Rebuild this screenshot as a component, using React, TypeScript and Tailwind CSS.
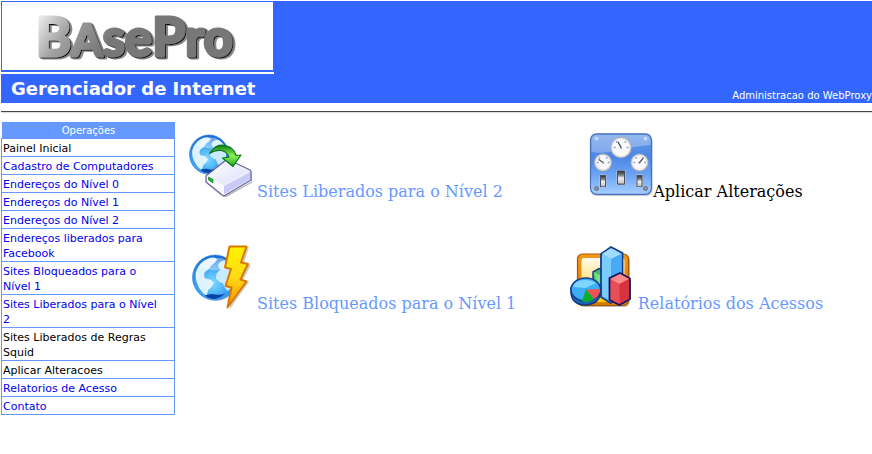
import React from 'react';

const menuItems = [
  { label: 'Painel Inicial', visited: true },
  { label: 'Cadastro de Computadores' },
  { label: 'Endereços do Nível 0' },
  { label: 'Endereços do Nível 1' },
  { label: 'Endereços do Nível 2' },
  { label: 'Endereços liberados para Facebook' },
  { label: 'Sites Bloqueados para o Nível 1' },
  { label: 'Sites Liberados para o Nível 2' },
  { label: 'Sites Liberados de Regras Squid', visited: true },
  { label: 'Aplicar Alteracoes', visited: true },
  { label: 'Relatorios de Acesso' },
  { label: 'Contato' },
];

const Logo = () => (
  <svg className="h-[68px] w-full" viewBox="0 0 272 68" role="img" aria-label="BasePro">
    <defs>
      <linearGradient id="metal" gradientUnits="userSpaceOnUse" x1="38" y1="10" x2="100" y2="50">
        <stop offset="0" stopColor="#f0f0f0" />
        <stop offset="0.45" stopColor="#a0a0a0" />
        <stop offset="1" stopColor="#777" />
      </linearGradient>
      <filter id="logoShadow" x="-5%" y="-10%" width="115%" height="130%">
        <feDropShadow dx="1" dy="1" stdDeviation="0.3" floodColor="#111" />
        <feDropShadow dx="2" dy="1" stdDeviation="0.6" floodColor="#888" />
      </filter>
    </defs>
    <text
      x="34"
      y="54"
      fontFamily="Lato, sans-serif"
      fontWeight="700"
      fontSize="51"
      fill="url(#metal)"
      stroke="url(#metal)"
      strokeWidth="3"
      strokeLinejoin="round"
      filter="url(#logoShadow)"
    >
      <tspan fontSize="54">B</tspan><tspan fontSize="45">A</tspan>se<tspan fontSize="54">P</tspan>ro
    </text>
  </svg>
);

const Globe = ({ id, cx, cy, r }: { id: string; cx: number; cy: number; r: number }) => (
  <g>
    <defs>
      <radialGradient id={id} cx="0.45" cy="0.62" r="0.62">
        <stop offset="0" stopColor="#7fdcff" />
        <stop offset="0.6" stopColor="#3aa0f0" />
        <stop offset="1" stopColor="#1767d2" />
      </radialGradient>
    </defs>
    <circle cx={cx + 0.8} cy={cy + 1} r={r} fill="#b9c6d6" />
    <circle cx={cx} cy={cy} r={r} fill={`url(#${id})`} stroke="#2a82de" strokeWidth="0.6" />
    <g transform={`translate(${cx} ${cy}) scale(${r / 20})`}>
      <path d="M-17-5Q-14-14-6-17Q0-19 2-16Q0-13-3-11Q-5-7-9-5Q-11-1-8 1Q-3 1-1 5Q-3 9-6 11Q-7 15-8 16Q-13 12-15 7Q-18 1-17-5Z" fill="#dff3ff" />
      <path d="M3-12Q6-16 10-15Q16-11 18-4Q18 2 16 7Q13 11 11 12Q8 9 7 5Q3 4 1 1Q0-4 5-7Q2-9 3-12Z" fill="#c9e9ff" />
      <path d="M-9 16Q-4 14 0 15Q5 16 9 14Q6 18 0 19Q-6 19-9 16Z" fill="#0643a8" />
      <path d="M-14-10Q-6-19 7-17Q14-13 15-9Q3-3-14-10Z" fill="#fff" opacity="0.35" />
    </g>
  </g>
);

const GlobeDriveIcon = () => (
  <svg className="size-16 shrink-0" viewBox="0 0 64 64" aria-hidden="true">
    <defs>
      <linearGradient id="driveTop" x1="0" y1="0" x2="1" y2="1">
        <stop offset="0" stopColor="#fff" />
        <stop offset="1" stopColor="#dcdcfc" />
      </linearGradient>
      <linearGradient id="greenArrow" x1="0" y1="0" x2="0" y2="1">
        <stop offset="0" stopColor="#077a12" />
        <stop offset="0.5" stopColor="#8cf05c" />
        <stop offset="1" stopColor="#18a61a" />
      </linearGradient>
    </defs>
    <Globe id="globeA" cx={21} cy={21.5} r={19.5} />
    <path d="M19 50L37 64L64 49V40" fill="none" stroke="#bbb" strokeWidth="1.5" />
    <path d="M18 43L38 27Q39 26 41 27L62 37Q63 38 63 39V47L37 62.5Q35.500 63 34 62L18 49Z" fill="#f4f4ff" stroke="#66669c" strokeWidth="1.3" />
    <path d="M19 43L39 28L61 38L36 52Z" fill="url(#driveTop)" />
    <path d="M36 53L62 39V46.500L36 61.500Z" fill="#c9cbf6" />
    <path d="M19 44L36 53V61.500L19 48.500Z" fill="#fafaff" />
    <path d="M20.500 44L25 46.500V50L20.500 47Z" fill="#13bd22" stroke="#087318" strokeWidth="0.6" />
    <path d="M21.500 20.500Q28 10 37 12.500Q46 14 48 22.500L53 22L45 33.500L34.500 25L41 24Q39 18.500 33 17.500Q27 16.500 21.500 20.500Z" fill="url(#greenArrow)" stroke="#087615" strokeWidth="1.2" strokeLinejoin="round" />
  </svg>
);

const Dial = ({ cx, cy, r, angle }: { cx: number; cy: number; r: number; angle: number }) => (
  <g transform={`translate(${cx} ${cy})`}>
    <circle r={r} fill="#c8c8c8" stroke="#9aa3b5" strokeWidth="0.6" />
    <circle r={r - 1.5} fill="#fafafa" stroke="#e8e8e8" strokeWidth="1" />
    <g fill="#6ba0ee">
      <rect x={-r * 0.68} y="-0.800" width="1.600" height="1.600" />
      <rect x={r * 0.54} y="-0.800" width="1.600" height="1.600" />
      <rect x={-r * 0.48} y={-r * 0.6} width="1.500" height="1.500" />
      <rect x={r * 0.34} y={-r * 0.6} width="1.500" height="1.500" />
    </g>
    <path d={`M0 1V${-r * 0.62}`} transform={`rotate(${angle})`} stroke="#444" strokeWidth="1.2" />
    <circle r="1" fill="#888" />
  </g>
);

const PanelIcon = () => (
  <svg className="size-16 shrink-0" viewBox="0 0 64 64" aria-hidden="true">
    <defs>
      <linearGradient id="panelBlue" x1="0" y1="0" x2="0" y2="1">
        <stop offset="0" stopColor="#6c9ce9" />
        <stop offset="0.38" stopColor="#4a86e6" />
        <stop offset="0.7" stopColor="#6fa6f4" />
        <stop offset="1" stopColor="#a8ceff" />
      </linearGradient>
      <linearGradient id="switchMetal" x1="0" y1="0" x2="0" y2="1">
        <stop offset="0" stopColor="#333" />
        <stop offset="0.3" stopColor="#888" />
        <stop offset="0.5" stopColor="#eee" />
        <stop offset="0.85" stopColor="#ccc" />
        <stop offset="1" stopColor="#555" />
      </linearGradient>
    </defs>
    <rect x="2" y="2" width="61.500" height="61" rx="6" fill="#c4c8d2" />
    <rect x="1.500" y="0.800" width="61" height="60.500" rx="6" fill="url(#panelBlue)" stroke="#4a72bc" strokeWidth="1.2" />
    <path d="M2.500 19V7Q3 2 8 2H56Q61 2 61.500 7V12Q38 14 28 18Q12 21 2.500 19Z" fill="#fff" opacity="0.28" />
    <g fill="#c4d6f7"><circle cx="7.500" cy="5.500" r="2" /><circle cx="56.500" cy="5.500" r="2" /></g>
    <g fill="#8a909c" stroke="#5a6478" strokeWidth="0.8">
      <circle cx="7.500" cy="55.500" r="2" /><circle cx="56.500" cy="55.500" r="2" />
    </g>
    <Dial cx={32} cy={14.5} r={10.5} angle={-28} />
    <Dial cx={14} cy={29.5} r={8.8} angle={-55} />
    <Dial cx={50.5} cy={29.5} r={8.8} angle={42} />
    {[[11, 42, 6, 12], [28, 37.5, 8, 14], [47.5, 42, 6, 12]].map(([x, y, w, h]) => (
      <g key={x}>
        <rect x={x - 0.5} y={y - 0.5} width={w + 1} height={h + 1} fill="#b4c9e8" />
        <rect x={x} y={y} width={w} height={h} fill="#4a5160" />
        <rect x={x + 1} y={y + 1} width={w - 2} height={h - 1} fill="url(#switchMetal)" />
      </g>
    ))}
  </svg>
);

const GlobeBoltIcon = () => (
  <svg className="size-16 shrink-0" viewBox="0 0 64 64" aria-hidden="true">
    <defs>
      <linearGradient id="bolt" x1="0" y1="0" x2="0" y2="1">
        <stop offset="0" stopColor="#fff200" />
        <stop offset="0.5" stopColor="#ffdc16" />
        <stop offset="1" stopColor="#f28a00" />
      </linearGradient>
    </defs>
    <Globe id="globeB" cx={27} cy={32.5} r={22.5} />
    <path d="M42 3L61 2L56 18L63 20L55 35L61 37L42 64Z" fill="#999" opacity="0.5" />
    <path d="M41.500 1.500H58.500L53 17.500L60 19L52.500 34.500L58.500 36.500L39.500 62.500L43.500 42.500L37.500 41L43 24L37 22.500Z" fill="url(#bolt)" stroke="#d97a00" strokeWidth="2" strokeLinejoin="round" />
  </svg>
);

const ChartIcon = () => (
  <svg className="size-16 shrink-0" viewBox="0 0 64 64" aria-hidden="true">
    <defs>
      <linearGradient id="frame" x1="0" y1="0" x2="0" y2="1">
        <stop offset="0" stopColor="#f39a1c" />
        <stop offset="1" stopColor="#d87800" />
      </linearGradient>
      <linearGradient id="paper" x1="0" y1="0" x2="0" y2="1">
        <stop offset="0" stopColor="#fffbe8" />
        <stop offset="0.4" stopColor="#ffe9a0" />
        <stop offset="1" stopColor="#ffd000" />
      </linearGradient>
    </defs>
    <rect x="9" y="10" width="52" height="52" rx="6" fill="#bbb" />
    <rect x="8.500" y="9" width="51" height="51.500" rx="5" fill="url(#frame)" stroke="#a95600" strokeWidth="1.2" />
    <rect x="12.500" y="13" width="43" height="44" rx="3" fill="url(#paper)" />
    <path d="M24 27L30 23.500L35 26V40L30 44L24 39Z" fill="#45bd63" stroke="#123f82" strokeWidth="1.5" />
    <path d="M24.500 27L30 30L34 27V40L30 43Z" fill="#79dd86" />
    <path d="M32 9L42 2L53.500 8V50L41.500 58L32 52Z" fill="#54b7ff" stroke="#173d8c" strokeWidth="1.8" />
    <path d="M33 9L42 3L52.500 9L42 14Z" fill="#9fdcff" />
    <path d="M42 14L52.500 9V50L42 57Z" fill="#48aaf5" />
    <path d="M33 10L42 14V56L33 51Z" fill="#7acbff" />
    <path d="M40.500 33L51 28L61 33.500V54L50.500 60L40.500 55Z" fill="#e94d56" stroke="#141464" strokeWidth="1.8" strokeLinejoin="round" />
    <path d="M41.500 34L51 29L60 34L50.500 39Z" fill="#ff8989" />
    <path d="M50.500 39L60 34V53.500L50.500 58.500Z" fill="#d8343f" />
    <path d="M2 43V48Q3 60 17 60Q30 59 31.500 48V43Z" fill="#1564b9" stroke="#16377a" strokeWidth="1.5" />
    <ellipse cx="16.800" cy="44.500" rx="14.800" ry="11.500" fill="#3caef5" stroke="#173f90" strokeWidth="1.5" />
    <path d="M17 44.500L31 44Q31 51 25 54Z" fill="#f05252" />
    <path d="M17 44.500L25 54Q22 57 18 57Q15 57 13 56Z" fill="#0cae2c" />
    <path d="M4 42Q6 35 16 35Q23 35 27 38L17 43Z" fill="#7ed6ff" />
  </svg>
);

const shortcuts = [
  { label: 'Sites Liberados para o Nível 2', icon: GlobeDriveIcon, gap: true },
  { label: 'Aplicar Alterações', icon: PanelIcon, visited: true },
  { label: 'Sites Bloqueados para o Nível 1', icon: GlobeBoltIcon, gap: true },
  { label: 'Relatórios dos Acessos', icon: ChartIcon, gap: true },
];

const App = () => {
  return (
    <div className="bg-white pt-px pl-px text-black">
      {/* Header */}
      <header className="flex items-end justify-between bg-[#3366ff] text-white">
        <div className="w-[273px] shrink-0">
          <div className="border border-b-2 border-[#3366ff] bg-white">
            <Logo />
          </div>
          <div className="h-0.5 bg-white" />
          <h1 className="px-2.5 font-['DejaVu_Sans',sans-serif] text-[18px] leading-[29px] font-bold whitespace-nowrap">
            Gerenciador de Internet
          </h1>
        </div>
        <p className="font-['DejaVu_Sans',sans-serif] text-[10px] leading-[14px] whitespace-nowrap">
          Administracao do WebProxy
        </p>
      </header>

      <hr className="mt-2 h-0.5 border-t border-b border-t-[#444] border-b-[#ddd]" />

      <div className="mt-[9px] flex items-start">
        {/* Menu */}
        <nav className="w-[174px] shrink-0 font-['DejaVu_Sans',sans-serif]">
          <h2 className="ml-px bg-[#6699ff] pt-px text-center text-[10px] leading-[15px] text-white">Operações</h2>
          <ul className="border border-[#6699ff]">
            {menuItems.map((item) => (
              <li key={item.label} className="border-b border-[#6699ff] pt-0.5 pr-2 pl-px text-[11px] leading-[15px] last:border-b-0">
                <a href="#" className={item.visited ? 'block text-black' : 'block text-[#0000ee]'}>
                  {item.label}
                </a>
              </li>
            ))}
          </ul>
        </nav>

        {/* Shortcuts */}
        <main className="ml-[13px] grid flex-1 grid-cols-[33fr_35fr] gap-y-[43px] pt-[11px] font-['DejaVu_Serif',serif] text-[16px] leading-5">
          {shortcuts.map(({ label, icon: Icon, visited, gap }) => (
            <div key={label} className="flex even:justify-center">
              <a
                href="#"
                className={`flex items-baseline whitespace-nowrap ${gap ? 'gap-[5px]' : ''} ${visited ? 'text-black' : 'text-[#6699ff]'}`}
              >
                <Icon />
                <span>{label}</span>
              </a>
            </div>
          ))}
        </main>
      </div>
    </div>
  );
};

export default App;
